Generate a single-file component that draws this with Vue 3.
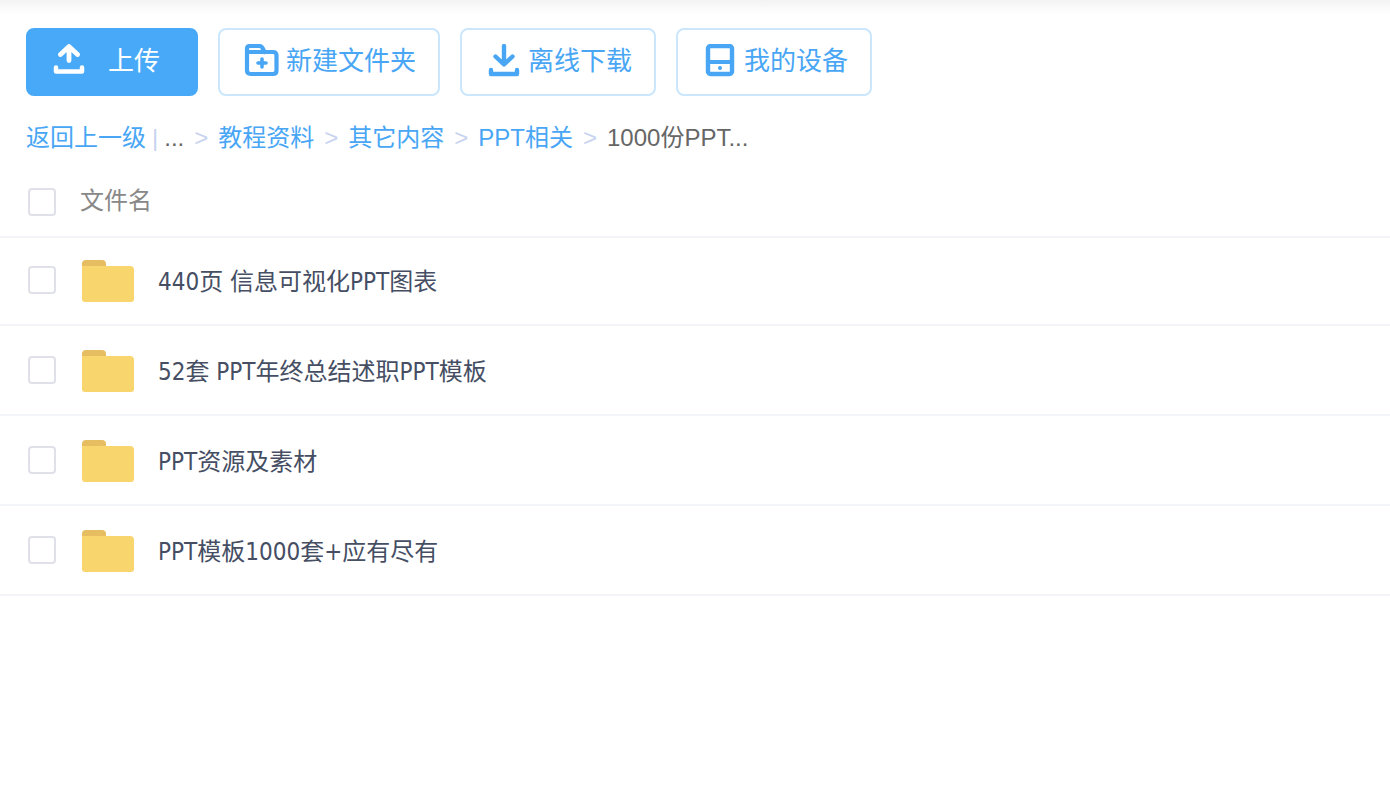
<script setup>
import { ref, computed } from 'vue'

const crumbs = ['教程资料', '其它内容', 'PPT相关']
const files = [
  '440页 信息可视化PPT图表',
  '52套 PPT年终总结述职PPT模板',
  'PPT资源及素材',
  'PPT模板1000套+应有尽有'
]
const selected = ref([])
const allSelected = computed({
  get: () => selected.value.length === files.length,
  set: (on) => { selected.value = on ? [...files] : [] }
})
</script>

<template>
  <main class="page">
    <div class="toolbar">
      <button type="button" class="btn btn-primary">
        <svg class="icon" viewBox="0 0 36 36" aria-hidden="true">
          <path d="M19 16.500V3M10.500 10.500L19 2.500L27.500 10.500" stroke-width="4.800" />
          <path d="M6 23.500V27.500H32V23.500" stroke-width="4.500" />
        </svg>
        <span>上传</span>
      </button>
      <button type="button" class="btn">
        <svg class="icon" viewBox="0 0 36 36" aria-hidden="true">
          <path d="M3 9V5Q3 2 6 2H15.500Q17.500 2 18.500 4L20.500 8M3 8H29Q32.500 8 32.500 11.500V26.500Q32.500 30 29 30H6.500Q3 30 3 26.500Z" stroke-width="4.200" />
          <path d="M18 15V23M14 19H22" stroke-width="3.600" />
        </svg>
        <span>新建文件夹</span>
      </button>
      <button type="button" class="btn">
        <svg class="icon" viewBox="0 0 36 36" aria-hidden="true">
          <path d="M18 2V20M9.500 12.500L18 20.500L26.500 12.500" stroke-width="4.400" />
          <path d="M5 26V30H31V26" stroke-width="4.400" />
        </svg>
        <span>离线下载</span>
      </button>
      <button type="button" class="btn">
        <svg class="icon" viewBox="0 0 36 36" aria-hidden="true">
          <rect x="6" y="2" width="24" height="28" rx="2.500" stroke-width="4.400" />
          <path d="M6 18H30" stroke-width="4" />
          <circle cx="18" cy="24" r="2" class="dot" />
        </svg>
        <span>我的设备</span>
      </button>
    </div>

    <nav class="crumbs" aria-label="路径">
      <a href="#">返回上一级</a>
      <span class="bar">|</span>
      <span>...</span>
      <template v-for="name in crumbs" :key="name">
        <span class="sep">&gt;</span>
        <a href="#">{{ name }}</a>
      </template>
      <span class="sep">&gt;</span>
      <span>1000份PPT...</span>
    </nav>

    <table class="files">
      <thead>
        <tr>
          <th class="pick"><input v-model="allSelected" type="checkbox" aria-label="全选"></th>
          <th class="title">文件名</th>
        </tr>
      </thead>
      <tbody>
        <tr v-for="(name, i) in files" :key="name">
          <td class="pick"><input :id="'file-' + i" v-model="selected" type="checkbox" :value="name"></td>
          <td>
            <label class="file" :for="'file-' + i">
              <svg class="folder" viewBox="0 0 52 42" aria-hidden="true">
                <path d="M0 10V4Q0 0 4 0H20Q24 0 24 4V10Z" fill="#e6bd60" />
                <path d="M0 6H48Q52 6 52 10V39Q52 42 49 42H3Q0 42 0 39Z" fill="#f9d56e" />
              </svg>
              <span>{{ name }}</span>
            </label>
          </td>
        </tr>
      </tbody>
    </table>
  </main>
</template>

<style>
body {
  margin: 0;
  background: #fff;
}
</style>

<style scoped>
.page {
  box-sizing: border-box;
  min-height: 100vh;
  padding-top: 28px;
  background: linear-gradient(#f3f3f3, #fff 14px);
  font-family: "Liberation Sans", "Noto Sans CJK SC", sans-serif;
  font-size: 24px;
  color: #666;
}

.toolbar {
  display: flex;
  flex-wrap: wrap;
  gap: 20px;
  padding: 0 26px;
}

.btn {
  box-sizing: border-box;
  display: flex;
  align-items: center;
  gap: 6px;
  height: 68px;
  padding: 0 22px 0 24px;
  border: 2px solid #cae7fd;
  border-radius: 8px;
  background: #fff;
  color: #48a6f5;
  font-family: inherit;
  font-size: 26px;
  line-height: 36px;
  white-space: nowrap;
  cursor: pointer;
}

.btn span {
  padding-bottom: 2px;
}

.btn-primary {
  gap: 22px;
  padding: 0 36px 0 22px;
  border-color: #48a9f9;
  background: #48a9f9;
  color: #fff;
}

.icon {
  width: 36px;
  height: 36px;
  fill: none;
  stroke: currentColor;
  stroke-linecap: round;
  stroke-linejoin: round;
}

.icon .dot {
  fill: currentColor;
  stroke: none;
}

.crumbs {
  display: flex;
  flex-wrap: wrap;
  padding: 24px 26px 0;
  line-height: 36px;
}

.crumbs a {
  color: #48a6f5;
  text-decoration: none;
}

.bar {
  margin: 0 6px;
  color: #c8d3f0;
}

.sep {
  margin: 0 10px;
  color: #c8d3f0;
}

.files {
  width: 100%;
  margin-top: 8px;
  border-spacing: 0;
}

th,
td {
  box-sizing: border-box;
  padding: 0;
  text-align: left;
  vertical-align: middle;
}

th {
  height: 72px;
  padding-top: 4px;
  font-weight: 400;
  color: #888;
}

.title {
  padding: 0 0 4px;
}

td {
  height: 90px;
  border-bottom: 2px solid #f2f4f8;
  color: #454e63;
  font-family: "DejaVu Sans Condensed", "Noto Sans CJK SC", sans-serif;
}

tbody tr:first-child td {
  box-shadow: inset 0 2px #f2f4f8;
}

.pick {
  width: 80px;
  padding-left: 28px;
}

input {
  appearance: none;
  display: block;
  box-sizing: border-box;
  width: 28px;
  height: 28px;
  margin: 0;
  border: 2px solid #dfe0e8;
  border-radius: 4px;
  background: #fff;
}

input:checked {
  border-color: #48a9f9;
  background: #48a9f9;
}

.file {
  display: flex;
  align-items: center;
  gap: 24px;
  padding: 2px 0 0 2px;
}

.file span {
  padding-bottom: 4px;
}

.folder {
  width: 52px;
  height: 42px;
}
</style>
